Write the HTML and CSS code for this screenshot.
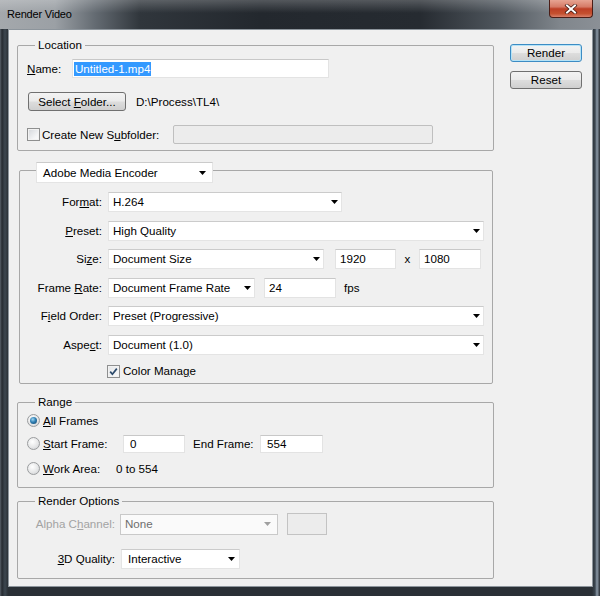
FILE: index.html
```html
<!DOCTYPE html>
<html>
<head>
<meta charset="utf-8">
<title>Render Video</title>
<link rel="stylesheet" href="styles.css">
</head>
<body>
<div class="window">
  <div class="titlebar">
    <span class="title">Render Video</span>
    <div class="close">
      <svg width="14" height="10" viewBox="0 0 14 10"><path d="M3 1.5L11 8.5M11 1.5L3 8.5" stroke="#3a120c" stroke-width="3.4" stroke-linecap="square"/><path d="M3 1.5L11 8.5M11 1.5L3 8.5" stroke="#fff" stroke-width="2" stroke-linecap="square"/></svg>
    </div>
  </div>
  <div class="client">
    <div class="main">
      <div class="group loc">
        <div class="gtitle">Location</div>
        <div class="row r-name">
          <span class="name-lbl"><u>N</u>ame:</span>
          <div class="field name-field"><span class="sel">Untitled-1.mp4</span></div>
        </div>
        <div class="row r-folder">
          <div class="btn folder-btn"><span>Select <u>F</u>older...</span></div>
          <span class="path">D:\Process\TL4\</span>
        </div>
        <div class="row r-sub">
          <span class="check"></span>
          <span class="sub-lbl">Create New S<u>u</u>bfolder:</span>
          <div class="field off sub-field"></div>
        </div>
      </div>

      <div class="group enc">
        <div class="dd enc-title"><span>Adobe Media Encoder</span><svg class="arr" width="7" height="4" viewBox="0 0 7 4"><path d="M0 0h7L3.5 4z"/></svg></div>
        <div class="erow first">
          <span class="elbl">For<u>m</u>at:</span>
          <div class="dd w-format"><span>H.264</span><svg class="arr" width="7" height="4" viewBox="0 0 7 4"><path d="M0 0h7L3.5 4z"/></svg></div>
        </div>
        <div class="erow">
          <span class="elbl"><u>P</u>reset:</span>
          <div class="dd w-wide"><span>High Quality</span><svg class="arr" width="7" height="4" viewBox="0 0 7 4"><path d="M0 0h7L3.5 4z"/></svg></div>
        </div>
        <div class="erow">
          <span class="elbl">Si<u>z</u>e:</span>
          <div class="dd w-size"><span>Document Size</span><svg class="arr" width="7" height="4" viewBox="0 0 7 4"><path d="M0 0h7L3.5 4z"/></svg></div>
          <div class="field num w-w">1920</div>
          <span class="times">x</span>
          <div class="field num w-h">1080</div>
        </div>
        <div class="erow">
          <span class="elbl">Frame <u>R</u>ate:</span>
          <div class="dd w-rate"><span>Document Frame Rate</span><svg class="arr" width="7" height="4" viewBox="0 0 7 4"><path d="M0 0h7L3.5 4z"/></svg></div>
          <div class="field num w-fps">24</div>
          <span class="fps">fps</span>
        </div>
        <div class="erow">
          <span class="elbl">F<u>i</u>eld Order:</span>
          <div class="dd w-wide"><span>Preset (Progressive)</span><svg class="arr" width="7" height="4" viewBox="0 0 7 4"><path d="M0 0h7L3.5 4z"/></svg></div>
        </div>
        <div class="erow">
          <span class="elbl">Aspe<u>c</u>t:</span>
          <div class="dd w-wide"><span>Document (1.0)</span><svg class="arr" width="7" height="4" viewBox="0 0 7 4"><path d="M0 0h7L3.5 4z"/></svg></div>
        </div>
        <div class="crow">
          <span class="check on"><svg width="11" height="11" viewBox="0 0 11 11"><path d="M2.2 5.6L4.4 8.2L8.8 2.6" fill="none" stroke="#2c4a6b" stroke-width="1.7"/></svg></span>
          <span class="cm-lbl">Color Mana<u>g</u>e</span>
        </div>
      </div>

      <div class="group range">
        <div class="gtitle">Range</div>
        <div class="rrow r1">
          <span class="radio on"><span class="dot"></span></span>
          <span><u>A</u>ll Frames</span>
        </div>
        <div class="rrow r2">
          <span class="radio"></span>
          <span class="start-lbl"><u>S</u>tart Frame:</span>
          <div class="field rf w-start">0</div>
          <span class="end-lbl">End Frame:</span>
          <div class="field rf w-end">554</div>
        </div>
        <div class="rrow r3">
          <span class="radio"></span>
          <span class="work-lbl"><u>W</u>ork Area:</span>
          <span>0 to 554</span>
        </div>
      </div>

      <div class="group ropts">
        <div class="gtitle">Render Options</div>
        <div class="orow o1">
          <span class="olbl dis">Alpha C<u>h</u>annel:</span>
          <div class="dd dd-off w-alpha"><span>None</span><svg class="arr" width="7" height="4" viewBox="0 0 7 4"><path d="M0 0h7L3.5 4z"/></svg></div>
          <div class="swatch"></div>
        </div>
        <div class="orow o2">
          <span class="olbl"><u>3</u>D Quality:</span>
          <div class="dd w-3d"><span>Interactive</span><svg class="arr" width="7" height="4" viewBox="0 0 7 4"><path d="M0 0h7L3.5 4z"/></svg></div>
        </div>
      </div>
    </div>

    <div class="side">
      <div class="btn default"><span>Render</span></div>
      <div class="btn"><span>Reset</span></div>
    </div>
  </div>
</div>
</body>
</html>
```

FILE: styles.css
```css
* { box-sizing: border-box; }
html, body { margin: 0; padding: 0; }
body {
  width: 600px;
  height: 596px;
  overflow: hidden;
  background: #2b3137;
  font-family: "Liberation Sans", Arial, sans-serif;
}
u { text-decoration: underline; text-underline-offset: 1px; text-decoration-thickness: 1px; }

.window {
  width: 600px;
  height: 596px;
  display: flex;
  flex-direction: column;
  background:
    linear-gradient(90deg, #59616a 0, #262b31 2px, #3d4750 5px, #2a3036 8px, #2a3036 592px, #3b4650 595px, #8c9aa8 597px, #262b31 600px);
}

.titlebar {
  height: 29px;
  flex: none;
  display: flex;
  justify-content: space-between;
  align-items: flex-start;
  background:
    linear-gradient(180deg, rgba(255,255,255,.22) 0, rgba(255,255,255,0) 13px),
    linear-gradient(90deg, #a4a8ac 0, #9ba0a5 55px, #646b72 95px, #30363c 140px, #23282e 260px, #262b31 420px, #4f565d 500px, #80868c 560px, #8b9096 600px);
}
.title {
  line-height: 29px;
  padding-left: 7px;
  font-size: 11px;
  letter-spacing: -0.2px;
  color: #000;
}
.close {
  width: 44px;
  height: 18px;
  margin-right: 7px;
  border: 1px solid #4b1d16;
  border-top: none;
  border-radius: 0 0 4px 4px;
  background: linear-gradient(180deg, #e7a493 0, #d67b67 40%, #bd3f26 52%, #c4502f 80%, #d8806a 100%);
  display: flex;
  align-items: center;
  justify-content: center;
}

.client {
  flex: 1;
  margin: 0 7px 9px 8px;
  background: #f0f0f0;
  border: 1px solid #8d959c;
  display: flex;
  align-items: flex-start;
  padding: 8px 0 0 8px;
  font-size: 11.6px;
  line-height: 14px;
  color: #000;
}

.main {
  width: 477px;
  margin-top: 7px;
  display: flex;
  flex-direction: column;
}

.group {
  border: 1px solid #a8a8a8;
  border-radius: 2px;
  display: flex;
  flex-direction: column;
}
.gtitle {
  align-self: flex-start;
  margin: -8px 0 0 8px;
  padding: 0 3px;
  height: 14px;
  line-height: 14px;
  background: #f0f0f0;
}

.row { display: flex; align-items: center; height: 19px; }

/* Location */
.loc { padding: 0 9px 6px 9px; }
.r-name { margin-top: 7px; }
.r-folder, .r-sub { margin-top: 14px; }
.name-lbl { width: 45px; flex: none; }
.field {
  height: 19px;
  background: #fff;
  border: 1px solid #e3e3e3;
  border-top-color: #c8c8c8;
  display: flex;
  align-items: center;
  padding-left: 3px;
  flex: none;
}
.field.off { background: #ececec; border: 1px solid #bfbfbf; border-radius: 2px; }
.name-field { width: 257px; padding-left: 1px; }
.sel { background: #3399ff; color: #fff; padding: 0 1px; line-height: 14px; }
.folder-btn { width: 98px; margin-left: 1px; }
.path { margin-left: 10px; }
.sub-lbl { width: 131px; margin-left: 2px; flex: none; }
.sub-field { width: 260px; }

.btn {
  height: 19px;
  border: 1px solid #707070;
  border-radius: 3px;
  background: linear-gradient(180deg, #f3f3f3 0, #ebebeb 48%, #dddddd 52%, #cfcfcf 100%);
  display: flex;
  align-items: center;
  justify-content: center;
  flex: none;
  white-space: nowrap;
}

.check {
  width: 13px;
  height: 13px;
  flex: none;
  border: 1px solid #8e8f8f;
  background: linear-gradient(135deg, #d3d6da 0, #f4f5f6 70%, #fbfbfb 100%);
  box-shadow: inset 0 0 0 1px #f2f2f2;
  display: flex;
  align-items: center;
  justify-content: center;
}
.check.on { background: linear-gradient(135deg, #e4e6e8 0, #fafafa 100%); }

/* Encoder */
.enc { margin: 19px 1px 0 2px; padding: 0 0 5px 0; }
.dd {
  height: 20px;
  background: #fff;
  border: 1px solid #e4e4e4;
  border-top-color: #cbcbcb;
  display: flex;
  align-items: center;
  justify-content: space-between;
  padding: 0 3px 0 4px;
  flex: none;
  white-space: nowrap;
}
.arr { flex: none; fill: #000; }
.enc-title { margin: -9px 0 0 16px; width: 177px; height: 21px; padding-left: 6px; padding-right: 6px; align-self: flex-start; }
.erow { display: flex; align-items: center; height: 20px; margin-top: 8.5px; }
.erow.first { margin-top: 9px; }
.elbl { width: 82px; text-align: right; margin-right: 6px; flex: none; }
.w-format { width: 234px; }
.w-wide { width: 376px; }
.w-size { width: 216px; }
.w-rate { width: 147px; }
.num { height: 20px; padding-left: 4px; }
.w-w { width: 61px; margin-left: 11px; }
.times { width: 23px; text-align: center; flex: none; }
.w-h { width: 62px; }
.w-fps { width: 72px; margin-left: 9px; }
.fps { margin-left: 8px; }
.crow { display: flex; align-items: center; height: 13px; margin-top: 10px; }
.crow .check { margin-left: 87px; }
.cm-lbl { margin-left: 3px; }

/* Range */
.range { margin-top: 18px; padding: 0 9px 9px 9px; }
.rrow { display: flex; align-items: center; height: 18px; }
.r1 { margin-top: 3px; }
.r2 { margin-top: 5px; }
.r3 { margin-top: 7px; }
.radio {
  width: 13px;
  height: 13px;
  flex: none;
  border-radius: 50%;
  border: 1px solid #9a9c9e;
  background: radial-gradient(circle at 40% 35%, #ffffff 0, #e6e7e8 55%, #c9ccd0 100%);
  margin-right: 3px;
  display: flex;
  align-items: center;
  justify-content: center;
}
.radio .dot {
  width: 7px;
  height: 7px;
  border-radius: 50%;
  background: radial-gradient(circle at 40% 35%, #9fd6f2 0, #2f7fb3 45%, #0f3f63 100%);
}
.start-lbl { width: 80px; flex: none; }
.rf { height: 18px; padding-left: 6px; }
.w-start { width: 62px; }
.end-lbl { margin-left: 8px; width: 67px; flex: none; }
.w-end { width: 63px; }
.work-lbl { width: 73px; flex: none; }

/* Render options */
.ropts { margin-top: 13px; padding: 0 9px 9px 9px; }
.orow { display: flex; align-items: center; }
.o1 { margin-top: 6px; height: 21px; }
.o2 { margin-top: 14px; height: 20px; }
.olbl { width: 88px; text-align: right; margin-right: 5px; flex: none; }
.dis { color: #a3a3a3; }
.dd-off { border: 1px solid #c9c9c9; background: #fafafa; color: #6e6e6e; height: 21px; padding-right: 6px; }
.dd-off .arr { fill: #a0a0a0; }
.w-alpha { width: 158px; }
.swatch { width: 40px; height: 22px; margin-left: 9px; border: 1px solid #c3c3c3; background: #ececec; flex: none; }
.w-3d { width: 119px; padding-left: 6px; padding-right: 4px; }
.o2 .olbl { margin-right: 6px; }

/* Side buttons */
.side {
  margin-left: 16px;
  margin-top: 6px;
  width: 72px;
  display: flex;
  flex-direction: column;
  gap: 9px;
}
.side .btn { height: 18px; width: 72px; }
.btn.default { border-color: #3c8cc4; box-shadow: inset 0 0 0 1px #b5e3f7; }
```
